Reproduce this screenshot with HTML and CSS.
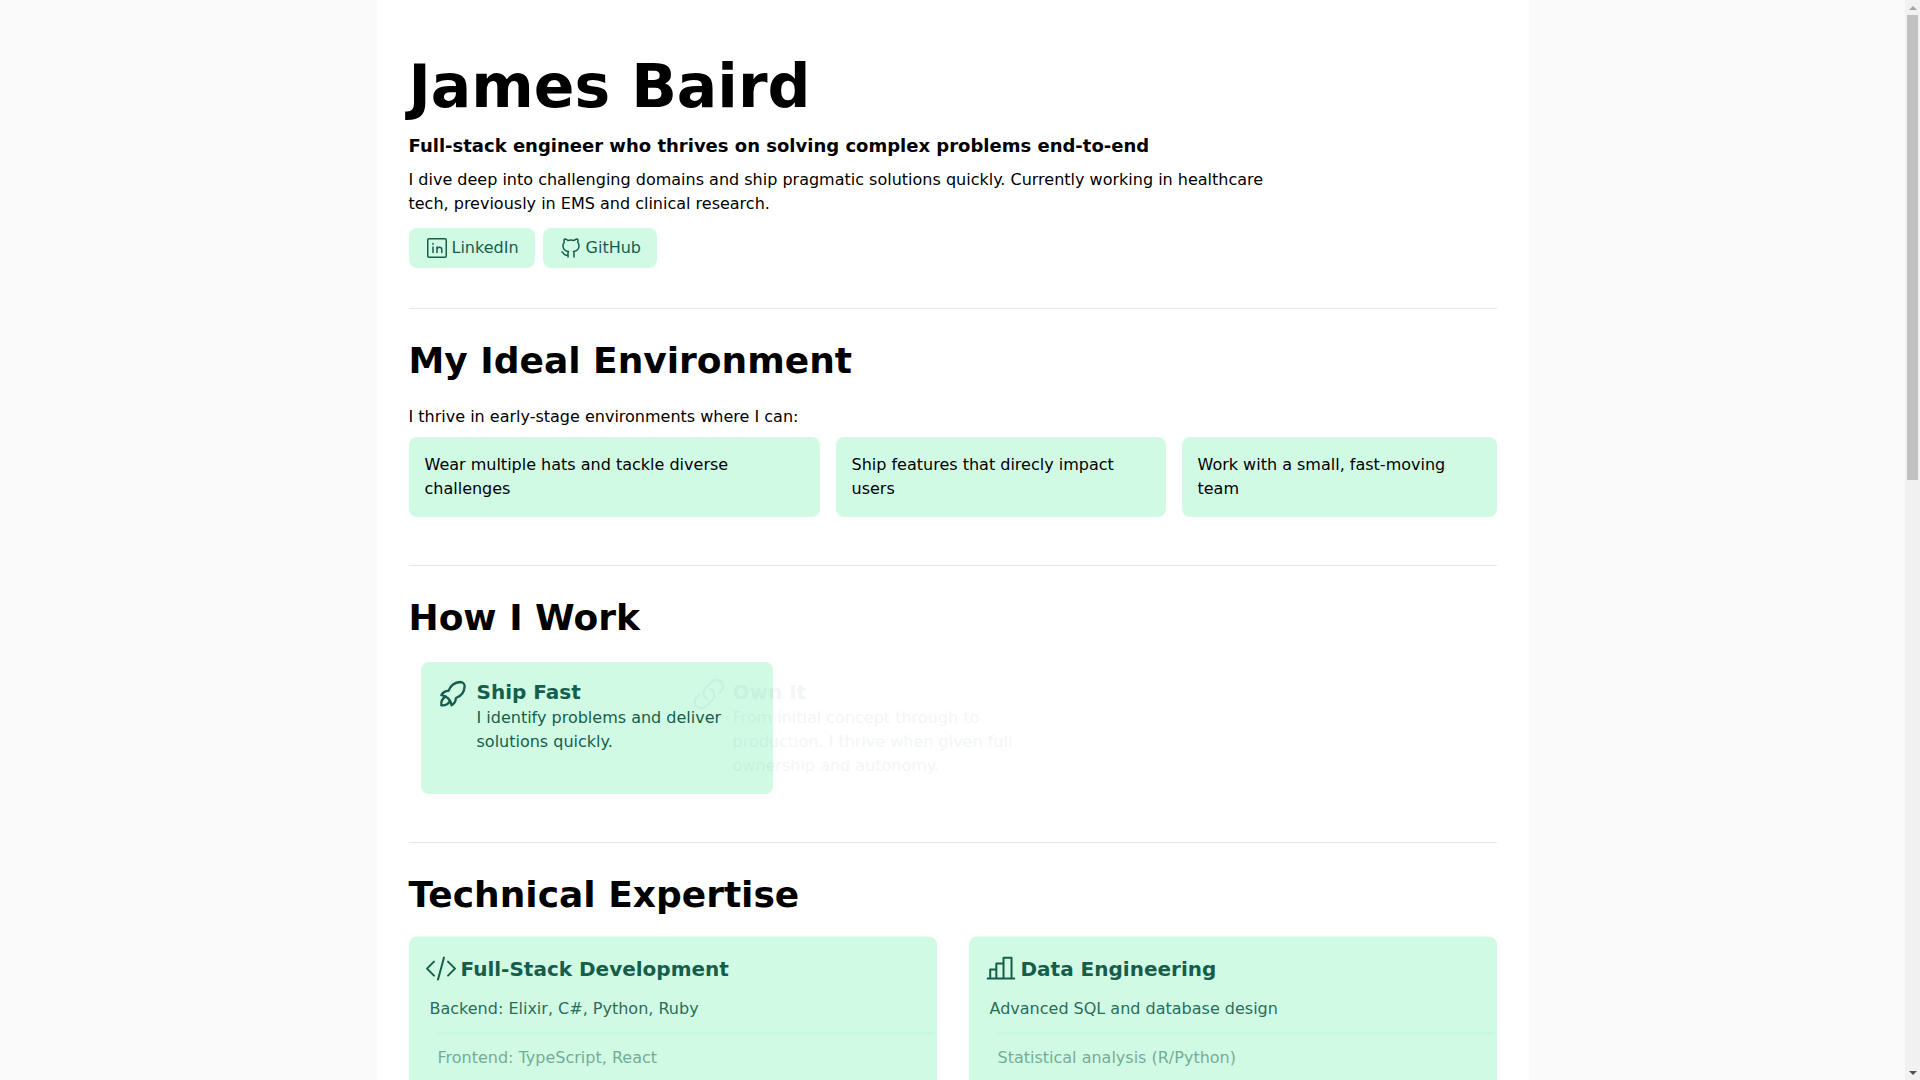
FILE: index.html
```html
<!DOCTYPE html>
<html lang="en">
<head>
<meta charset="utf-8">
<title>James Baird</title>
<link rel="stylesheet" href="styles.css">
</head>
<body>
<div class="app">
<div class="scroller">
<main class="page">
  <header class="hero">
    <h1 class="name">James Baird</h1>
    <p class="tagline">Full-stack engineer who thrives on solving complex problems end-to-end</p>
    <p class="intro">I dive deep into challenging domains and ship pragmatic solutions quickly. Currently working in healthcare tech, previously in EMS and clinical research.</p>
    <nav class="links">
      <a class="link" href="#">
        <svg class="icon-link" viewBox="0 0 24 24"><rect x="2.75" y="2.75" width="18.5" height="18.5" rx="1.2"/><path d="M8 11v5.5M8 7.6v.6M12 16.5V11M12 13.6a2.4 2.4 0 0 1 4.8 0v2.9"/></svg>
        LinkedIn
      </a>
      <a class="link" href="#">
        <svg class="icon-link" viewBox="0 0 24 24"><path d="M9 19c-4.3 1.4-4.3-2.5-6-3m12 5v-3.5c0-1 .1-1.4-.5-2c2.8-.3 5.5-1.4 5.5-6a4.6 4.6 0 0 0-1.3-3.2a4.2 4.2 0 0 0-.1-3.2s-1.1-.3-3.5 1.3a12.3 12.3 0 0 0-6.2 0c-2.4-1.6-3.5-1.3-3.5-1.3a4.2 4.2 0 0 0-.1 3.2a4.6 4.6 0 0 0-1.3 3.2c0 4.6 2.7 5.7 5.5 6c-.6.6-.6 1.2-.5 2v3.5"/></svg>
        GitHub
      </a>
    </nav>
  </header>

  <section class="section">
    <h2 class="heading">My Ideal Environment</h2>
    <p class="lead">I thrive in early-stage environments where I can:</p>
    <div class="traits">
      <div class="trait">Wear multiple hats and tackle diverse challenges</div>
      <div class="trait">Ship features that direcly impact users</div>
      <div class="trait">Work with a small, fast-moving team</div>
    </div>
  </section>

  <section class="section">
    <h2 class="heading">How I Work</h2>
    <div class="carousel">
      <article class="slide slide-current">
        <svg class="icon-large icon-rocket" viewBox="1 1.25 22 22"><path d="M4 13a8 8 0 0 1 7 7a6 6 0 0 0 3-5a9 9 0 0 0 6-8a3 3 0 0 0-3-3a9 9 0 0 0-8 6a6 6 0 0 0-5 3"/><path d="M7 14a6 6 0 0 0-3 6a6 6 0 0 0 6-3"/></svg>
        <div class="slide-body">
          <h3 class="slide-title">Ship Fast</h3>
          <p class="slide-text">I identify problems and deliver solutions quickly.</p>
        </div>
      </article>
      <article class="slide slide-next">
        <svg class="icon-large" viewBox="1 1 22 22"><path d="M13.19 8.688a4.5 4.5 0 0 1 1.242 7.244l-4.5 4.5a4.5 4.5 0 0 1-6.364-6.364l1.757-1.757m13.35-.622 1.757-1.757a4.5 4.5 0 0 0-6.364-6.364l-4.5 4.5a4.5 4.5 0 0 0 1.242 7.244"/></svg>
        <div class="slide-body">
          <h3 class="slide-title">Own It</h3>
          <p class="slide-text">From initial concept through to production. I thrive when given full ownership and autonomy.</p>
        </div>
      </article>
    </div>
  </section>

  <section class="section">
    <h2 class="heading">Technical Expertise</h2>
    <div class="skills">
      <article class="skill">
        <h3 class="skill-title">
          <svg class="icon-large" viewBox="0 0 24 24"><path d="M17.25 6.75 22.5 12l-5.25 5.25m-10.5 0L1.5 12l5.25-5.25m7.5-3-4.5 16.5"/></svg>
          Full-Stack Development
        </h3>
        <ul class="skill-list">
          <li class="skill-item skill-item-first">Backend: Elixir, C#, Python, Ruby</li>
          <li class="skill-item skill-item-second">Frontend: TypeScript, React</li>
        </ul>
      </article>
      <article class="skill">
        <h3 class="skill-title">
          <svg class="icon-large" viewBox="0 0 24 24"><path d="M2 19.45h20M3.9 19.25v-6.6h4.6v6.6M8.5 12.25v-4h5.4v11M13.9 8.25V3.85h6v15.4"/></svg>
          Data Engineering
        </h3>
        <ul class="skill-list">
          <li class="skill-item skill-item-first">Advanced SQL and database design</li>
          <li class="skill-item skill-item-second">Statistical analysis (R/Python)</li>
        </ul>
      </article>
    </div>
  </section>
</main>
</div>
<div class="scrollbar">
  <div class="scroll-button"><svg class="arrow arrow-up" viewBox="0 0 8 4"><polygon points="4,0 8,4 0,4"/></svg></div>
  <div class="scroll-track"><div class="scroll-thumb"></div></div>
  <div class="scroll-button"><svg class="arrow arrow-down" viewBox="0 0 8 4"><polygon points="0,0 8,0 4,4"/></svg></div>
</div>
</div>
</body>
</html>
```
FILE: styles.css
```css
* { box-sizing: border-box; }

body {
  margin: 0;
  font-family: "DejaVu Sans", sans-serif;
  font-size: 16px;
  line-height: 24px;
  color: #000;
}

.app {
  display: flex;
  height: 100vh;
  overflow: hidden;
}

.scroller {
  flex: 1;
  min-width: 0;
  overflow: hidden;
  background: #fafafa;
}

.scrollbar {
  display: flex;
  flex-direction: column;
  width: 15px;
  background: #f1f1f1;
}

.scroll-button {
  display: flex;
  align-items: center;
  justify-content: center;
  height: 15px;
}

.scroll-track {
  flex: 1;
  padding: 0 2px;
}

.scroll-thumb {
  height: 465px;
  background: #c1c1c1;
}

svg.arrow {
  width: 8px;
  height: 4px;
  stroke: none;
}

.arrow-up { fill: #a3a3a3; }
.arrow-down { fill: #505050; }

.page {
  width: 1152px;
  margin: 0 auto;
  padding: 56px 32px 32px;
  background: #fff;
}

.hero { padding-bottom: 40px; }

.name {
  margin: 0 0 16px;
  font-size: 60px;
  line-height: 60px;
  font-weight: 700;
}

.tagline {
  margin: 0 0 8px;
  font-size: 18px;
  line-height: 28px;
  font-weight: 700;
}

.intro { margin: 0 0 12px; max-width: 896px; }

.links { display: flex; gap: 8px; }

.link {
  display: inline-flex;
  align-items: center;
  gap: 3px;
  height: 40px;
  padding: 0 16px;
  border-radius: 8px;
  background: #d1fae5;
  color: #155e4b;
  text-decoration: none;
}

svg {
  fill: none;
  stroke: currentColor;
  stroke-width: 1.5;
  stroke-linecap: round;
  stroke-linejoin: round;
  flex: none;
}

.icon-link { width: 24px; height: 24px; }
.icon-large { width: 32px; height: 32px; }
.icon-rocket { stroke-width: 1.6; }

.section {
  border-top: 1px solid #e5e7eb;
  padding: 32px 0 48px;
}

.heading {
  margin: 0 0 24px;
  font-size: 36px;
  line-height: 40px;
  font-weight: 700;
}

.lead { margin: 0 0 8px; }

.traits {
  display: grid;
  grid-template-columns: 411fr 330fr 315fr;
  gap: 16px;
}

.trait {
  padding: 16px;
  border-radius: 8px;
  background: #d1fae5;
}

.carousel {
  position: relative;
  display: flex;
  padding-left: 12px;
}

.slide {
  display: flex;
  gap: 8px;
  width: 352px;
  height: 132px;
  padding: 16px;
  border-radius: 8px;
  background: #d1fae5;
  color: #155e4b;
}

.slide-next {
  position: absolute;
  left: 268px;
  top: 0;
  background: transparent;
  opacity: 0.05;
}

.slide-title {
  margin: 0;
  font-size: 20px;
  line-height: 28px;
  font-weight: 700;
}

.slide-text { margin: 0; }

.skills {
  display: grid;
  grid-template-columns: 1fr 1fr;
  gap: 32px;
  transform: translateY(-2.4px);
}

.skill {
  min-height: 300px;
  padding: 16px;
  border-radius: 8px;
  background: #d1fae5;
  color: #155e4b;
}

.skill-title {
  display: flex;
  align-items: center;
  gap: 4px;
  margin: 0;
  font-size: 20px;
  line-height: 28px;
  font-weight: 700;
}

.skill-list { margin: 0; padding: 0; list-style: none; }

.skill-item { padding: 12px 0; }

.skill-item-first { transform: translateX(5px); opacity: 0.9; }

.skill-item-second {
  border-top: 1px solid #a7f3d0;
  transform: translateX(13px);
  opacity: 0.5;
}
```
